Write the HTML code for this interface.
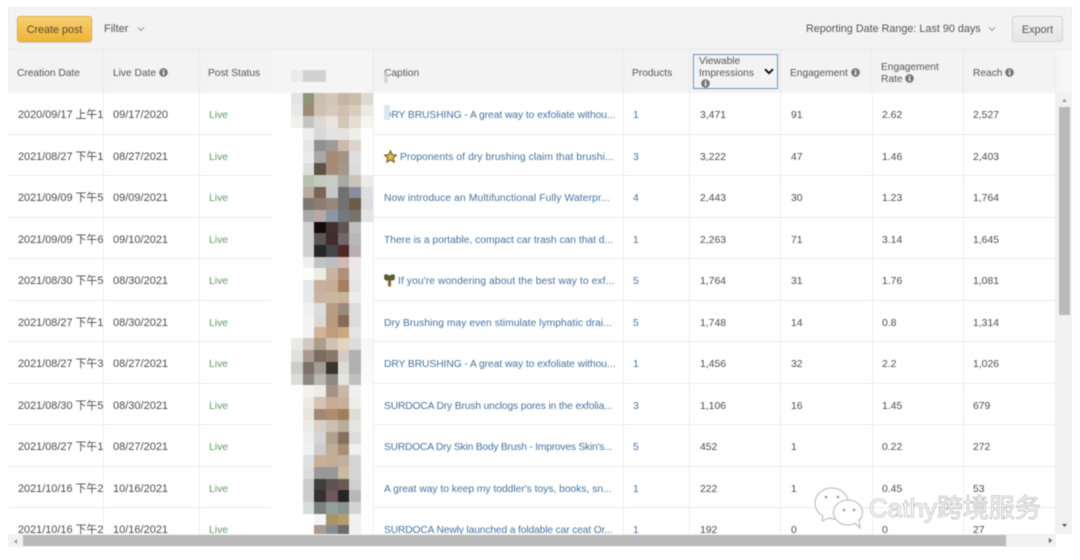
<!DOCTYPE html>
<html><head><meta charset="utf-8"><style>
*{box-sizing:border-box}
html,body{margin:0;padding:0;width:1080px;height:560px;overflow:hidden;background:#fff}
body{font-family:"Liberation Sans","Noto Sans CJK SC",sans-serif;color:#4a4a4a;position:relative}
#w{position:absolute;left:0;top:0;width:1080px;height:560px;filter:blur(.4px)}
.a{position:absolute}
.t{white-space:nowrap}
.h{position:absolute;top:50px;height:43px;border-right:1px solid #e8e8e8;font-size:10.2px;color:#555;line-height:12px}
.h span{position:absolute;white-space:nowrap}
.r{position:absolute;left:8px;width:1048px;height:41.5px;border-bottom:1px solid #ebebeb;font-size:10.4px;line-height:45.5px;color:#4a4a4a}
.r span{position:absolute;top:0;white-space:nowrap}
.r span:nth-child(1){left:10px;width:85px;overflow:hidden;font-size:10.9px}
.r span:nth-child(2){left:105px;font-size:11px}
.r span:nth-child(3){left:201px;color:#5e9a5e;font-size:10.4px}
.r span:nth-child(4){left:376px;color:#44729f;font-size:10.25px}
.r span:nth-child(5){left:625px;color:#44729f}
.r span:nth-child(6){left:692px}
.r span:nth-child(7){left:783px}
.r span:nth-child(8){left:874px}
.r span:nth-child(9){left:965px}
.v{position:absolute;top:93px;width:1px;height:441px;background:#ededed}
#m{position:absolute;left:291px;top:93px;width:82px;display:grid;grid-template-columns:repeat(7,11.7px);grid-auto-rows:11.7px;height:441px;overflow:hidden}
.i{display:inline-block;width:9px;height:9px;vertical-align:-1px}
</style></head><body><div id="w">
<svg width="0" height="0" style="position:absolute"><defs><symbol id="inf" viewBox="0 0 10 10"><circle cx="5" cy="5" r="4.8" fill="#767676"/><rect x="4.2" y="4.2" width="1.7" height="3.6" fill="#fff"/><rect x="4.2" y="2" width="1.7" height="1.5" fill="#fff"/></symbol></defs></svg>

<div class="a" style="left:8px;top:7px;width:1064px;height:43px;background:#f3f3f3;border:1px solid #ececec;border-bottom:1px solid #e8e8e8"></div>
<div class="a" style="left:8px;top:50px;width:1048px;height:43px;background:#f3f3f3"></div>
<div class="a" style="left:1056px;top:50px;width:16px;height:43px;background:#f6f6f6"></div>

<div class="a t" style="left:17px;top:16px;width:75px;height:26px;border-radius:3px;background:linear-gradient(#f7cf72,#efb437);border:1px solid #dfae45;box-shadow:0 1px 1px #ccc;font-size:10.8px;line-height:26px;text-align:center;color:#5a4a2a">Create post</div>
<div class="a t" style="left:104px;top:23px;font-size:11px;color:#555">Filter</div>
<svg class="a" style="left:137px;top:26px" width="8" height="6" viewBox="0 0 8 6"><path d="M1 1.5 L4 4.5 L7 1.5" fill="none" stroke="#9a9a9a" stroke-width="1"/></svg>
<div class="a t" style="left:806px;top:23px;font-size:10.8px;color:#555">Reporting Date Range: Last 90 days</div>
<svg class="a" style="left:988px;top:26px" width="8" height="6" viewBox="0 0 8 6"><path d="M1 1.5 L4 4.5 L7 1.5" fill="none" stroke="#9a9a9a" stroke-width="1"/></svg>
<div class="a t" style="left:1012px;top:16px;width:51px;height:26px;border-radius:2px;background:linear-gradient(#f2f2f2,#e6e6e6);border:1px solid #d4d4d4;font-size:10.8px;line-height:26px;text-align:center;color:#555">Export</div>

<div class="h" style="left:8px;width:96px"><span style="left:9px;top:18px">Creation Date</span></div>
<div class="h" style="left:104px;width:96px"><span style="left:9px;top:18px">Live Date <svg class="i"><use href="#inf"/></svg></span></div>
<div class="h" style="left:200px;width:174px"><span style="left:8px;top:18px">Post Status</span></div>
<div class="h" style="left:374px;width:250px"><span style="left:10px;top:18px">Caption</span></div>
<div class="h" style="left:624px;width:66px"><span style="left:8px;top:18px">Products</span></div>
<div class="h" style="left:690px;width:91px;border-right:1px solid #e8e8e8"><span style="left:9px;top:6px">Viewable</span><span style="left:9px;top:18px">Impressions</span><svg class="i a" style="left:11px;top:29px"><use href="#inf"/></svg></div>
<div class="a" style="left:693px;top:54px;width:85px;height:35px;border:1px solid #6d93b8"></div>
<svg class="a" style="left:764px;top:68px" width="10" height="7" viewBox="0 0 10 7"><path d="M1 1.2 L5 5.2 L9 1.2" fill="none" stroke="#111" stroke-width="1.9"/></svg>
<div class="h" style="left:781px;width:91px"><span style="left:9px;top:18px">Engagement <svg class="i"><use href="#inf"/></svg></span></div>
<div class="h" style="left:872px;width:92px"><span style="left:9px;top:12px">Engagement</span><span style="left:9px;top:24px">Rate <svg class="i"><use href="#inf"/></svg></span></div>
<div class="h" style="left:964px;width:92px;border-right:1px solid #ececec"><span style="left:9px;top:18px">Reach <svg class="i"><use href="#inf"/></svg></span></div>

<div class="a" style="left:8px;top:93px;width:1048px;height:441px;overflow:hidden">
<div class="r" style="top:0;left:0"><span>2020/09/17 上午10:15</span><span>09/17/2020</span><span>Live</span><span style="letter-spacing:-.05px">DRY BRUSHING - A great way to exfoliate withou...</span><span>1</span><span>3,471</span><span>91</span><span>2.62</span><span>2,527</span></div>
<div class="r" style="top:41.5px;left:0"><span>2021/08/27 下午12:30</span><span>08/27/2021</span><span>Live</span><span style="letter-spacing:.1px"><svg width="13" height="13" viewBox="0 0 24 24" style="vertical-align:-3px;margin-right:3px"><path d="M12 1.5 L15.2 8.6 L23 9.4 L17.1 14.6 L18.9 22.4 L12 18.3 L5.1 22.4 L6.9 14.6 L1 9.4 L8.8 8.6 Z" fill="#e3bf45" stroke="#6b5a20" stroke-width="2"/></svg>Proponents of dry brushing claim that brushi...</span><span>3</span><span>3,222</span><span>47</span><span>1.46</span><span>2,403</span></div>
<div class="r" style="top:83px;left:0"><span>2021/09/09 下午5:20</span><span>09/09/2021</span><span>Live</span><span style="letter-spacing:.13px">Now introduce an Multifunctional Fully Waterpr...</span><span>4</span><span>2,443</span><span>30</span><span>1.23</span><span>1,764</span></div>
<div class="r" style="top:124.5px;left:0"><span>2021/09/09 下午6:10</span><span>09/10/2021</span><span>Live</span><span>There is a portable, compact car trash can that d...</span><span>1</span><span>2,263</span><span>71</span><span>3.14</span><span>1,645</span></div>
<div class="r" style="top:166px;left:0"><span>2021/08/30 下午5:40</span><span>08/30/2021</span><span>Live</span><span style="letter-spacing:.1px"><svg width="11" height="13" viewBox="0 0 11 13" style="vertical-align:-3px;margin-right:3px"><path d="M0.5 1 L3 .5 L5.5 2 L8 .5 L10.5 1 L10.5 5 L9 6.5 L7.5 5.5 L7 7 L4 7 L3.5 5.5 L2 6.5 L.5 5 Z" fill="#55622f" stroke="#3d3d20" stroke-width=".5"/><rect x="4" y="6" width="3" height="6.5" fill="#8a6a30"/></svg>If you're wondering about the best way to exf...</span><span>5</span><span>1,764</span><span>31</span><span>1.76</span><span>1,081</span></div>
<div class="r" style="top:207.5px;left:0"><span>2021/08/27 下午1:05</span><span>08/30/2021</span><span>Live</span><span style="letter-spacing:.06px">Dry Brushing may even stimulate lymphatic drai...</span><span>5</span><span>1,748</span><span>14</span><span>0.8</span><span>1,314</span></div>
<div class="r" style="top:249px;left:0"><span>2021/08/27 下午3:25</span><span>08/27/2021</span><span>Live</span><span style="letter-spacing:-.05px">DRY BRUSHING - A great way to exfoliate withou...</span><span>1</span><span>1,456</span><span>32</span><span>2.2</span><span>1,026</span></div>
<div class="r" style="top:290.5px;left:0"><span>2021/08/30 下午5:50</span><span>08/30/2021</span><span>Live</span><span style="letter-spacing:-.13px">SURDOCA Dry Brush unclogs pores in the exfolia...</span><span>3</span><span>1,106</span><span>16</span><span>1.45</span><span>679</span></div>
<div class="r" style="top:332px;left:0"><span>2021/08/27 下午1:15</span><span>08/27/2021</span><span>Live</span><span style="letter-spacing:-.2px">SURDOCA Dry Skin Body Brush - Improves Skin's...</span><span>5</span><span>452</span><span>1</span><span>0.22</span><span>272</span></div>
<div class="r" style="top:373.5px;left:0"><span>2021/10/16 下午2:40</span><span>10/16/2021</span><span>Live</span><span>A great way to keep my toddler's toys, books, sn...</span><span>1</span><span>222</span><span>1</span><span>0.45</span><span>53</span></div>
<div class="r" style="top:415px;left:0"><span>2021/10/16 下午2:30</span><span>10/16/2021</span><span>Live</span><span style="letter-spacing:-.13px">SURDOCA Newly launched a foldable car ceat Or...</span><span>1</span><span>192</span><span>0</span><span>0</span><span>27</span></div>
</div>

<i class="v" style="left:103px"></i><i class="v" style="left:199px"></i><i class="v" style="left:373px"></i><i class="v" style="left:623px"></i><i class="v" style="left:689px"></i><i class="v" style="left:780px"></i><i class="v" style="left:872px"></i><i class="v" style="left:963px"></i><i class="v" style="left:1055px"></i>

<div class="a" style="left:272px;top:93px;width:101px;height:441px;background:#fff"></div>
<div class="a" style="left:272px;top:50px;width:101px;height:43px;background:#f5f5f5"></div>
<div class="a" style="left:291px;top:70px;width:11.7px;height:11.7px;background:#ebebeb"></div>
<div class="a" style="left:302.7px;top:70px;width:23.4px;height:11.7px;background:#d2d2d2"></div>
<div class="a" style="left:384px;top:72px;width:4px;height:11px;background:#ccc;opacity:.7"></div>
<div class="a" style="left:384px;top:105px;width:6px;height:15px;background:#dfe4ee"></div>

<div id="m">
<i style="background:#e4e4e4"></i><i style="background:#8f9576"></i><i style="background:#cdbfb0"></i><i style="background:#d2c6b8"></i><i style="background:#c5b5a4"></i><i style="background:#ccbdab"></i><i style="background:#dcd8d2"></i>
<i style="background:#e8e8e8"></i><i style="background:#9a8b72"></i><i style="background:#d0c0b2"></i><i style="background:#d6c9bd"></i><i style="background:#cfbfb0"></i><i style="background:#d8cebf"></i><i style="background:#ece9e4"></i>
<i style="background:#f0f0ee"></i><i style="background:#c4c4c0"></i><i style="background:#dcd8d2"></i><i style="background:#e8e4dc"></i><i style="background:#d2c6b6"></i><i style="background:#e6ddd4"></i><i style="background:#f6f4f0"></i>
<i></i><i style="background:#eee"></i><i style="background:#d8d8d8"></i><i style="background:#e4e2e2"></i><i style="background:#e4e2dc"></i><i style="background:#eeeeea"></i><i></i>
<i></i><i style="background:#e6e6e6"></i><i style="background:#929090"></i><i style="background:#a09a96"></i><i style="background:#cdb9aa"></i><i style="background:#dcd4cc"></i><i></i>
<i></i><i style="background:#eaeaea"></i><i style="background:#a8a8a8"></i><i style="background:#a58b78"></i><i style="background:#a09488"></i><i style="background:#dedede"></i><i></i>
<i></i><i style="background:#dedede"></i><i style="background:#5f5144"></i><i style="background:#a58c78"></i><i style="background:#a39888"></i><i style="background:#dcdcdc"></i><i></i>
<i></i><i style="background:#b8c0b0"></i><i style="background:#c4cabc"></i><i style="background:#c8ccc4"></i><i style="background:#a8a8a4"></i><i style="background:#ccc4bc"></i><i style="background:#ecebe8"></i>
<i></i><i style="background:#b8aa9c"></i><i style="background:#7a6458"></i><i style="background:#c8c8c8"></i><i style="background:#707070"></i><i style="background:#8a8e9c"></i><i style="background:#dedee4"></i>
<i></i><i style="background:#7e7674"></i><i style="background:#8e7c70"></i><i style="background:#938a7c"></i><i style="background:#727272"></i><i style="background:#6a5c48"></i><i style="background:#dcdce0"></i>
<i></i><i style="background:#a8a8a8"></i><i style="background:#b8a8a8"></i><i style="background:#8c96a4"></i><i style="background:#707880"></i><i style="background:#74746c"></i><i style="background:#e4e4e4"></i>
<i></i><i style="background:#d0d0d0"></i><i style="background:#120c0c"></i><i style="background:#403030"></i><i style="background:#605454"></i><i style="background:#c0c0c0"></i><i></i>
<i></i><i style="background:#d0d0d0"></i><i style="background:#5a5650"></i><i style="background:#402c2c"></i><i style="background:#706868"></i><i style="background:#b8b8b8"></i><i></i>
<i></i><i style="background:#d0d0d0"></i><i style="background:#24262a"></i><i style="background:#44444a"></i><i style="background:#502824"></i><i style="background:#b8b0b0"></i><i></i>
<i></i><i style="background:#f0f0f0"></i><i style="background:#c0c4c4"></i><i style="background:#bcc0c0"></i><i style="background:#d4b8b4"></i><i style="background:#ece6e4"></i><i></i>
<i></i><i style="background:#fcfcf8"></i><i style="background:#ecece4"></i><i style="background:#c8b4a0"></i><i style="background:#b09078"></i><i style="background:#e8e8e8"></i><i></i>
<i></i><i style="background:#e8e8e8"></i><i style="background:#c8b09c"></i><i style="background:#c8ac94"></i><i style="background:#a5805c"></i><i style="background:#e4e4e4"></i><i></i>
<i></i><i style="background:#e8e8e8"></i><i style="background:#c8b4a0"></i><i style="background:#ccb8a0"></i><i style="background:#c8b49c"></i><i style="background:#ecece8"></i><i></i>
<i></i><i style="background:#f0f0f0"></i><i style="background:#dcdcdc"></i><i style="background:#b89c84"></i><i style="background:#9a8c7c"></i><i style="background:#dcdce0"></i><i></i>
<i></i><i style="background:#f4f4f4"></i><i style="background:#dcd8d4"></i><i style="background:#b89c80"></i><i style="background:#8a6a54"></i><i style="background:#dcdcdc"></i><i></i>
<i></i><i style="background:#f4f4f4"></i><i style="background:#d0b498"></i><i style="background:#c09c7c"></i><i style="background:#cba880"></i><i style="background:#e4e4e4"></i><i></i>
<i style="background:#ebe9e6"></i><i style="background:#d4c8c0"></i><i style="background:#ae9c88"></i><i style="background:#cfc2b4"></i><i style="background:#e2d4c0"></i><i style="background:#dedcd8"></i><i style="background:#f8f8f8"></i>
<i style="background:#e0e0dc"></i><i style="background:#a89c90"></i><i style="background:#7c6c60"></i><i style="background:#887868"></i><i style="background:#d4ccc4"></i><i style="background:#b0b0b0"></i><i style="background:#f8f8f8"></i>
<i style="background:#ccc"></i><i style="background:#7e7268"></i><i style="background:#a09c94"></i><i style="background:#383430"></i><i style="background:#dcdcd4"></i><i style="background:#b0b0b0"></i><i style="background:#fafafa"></i>
<i style="background:#dcdcd8"></i><i style="background:#8c8880"></i><i style="background:#b8b8ae"></i><i style="background:#908880"></i><i style="background:#e4e4e0"></i><i style="background:#c0c0c0"></i><i style="background:#fafafa"></i>
<i></i><i style="background:#f4f0ec"></i><i style="background:#ecebe6"></i><i style="background:#a49488"></i><i style="background:#c8b8a8"></i><i style="background:#f0f0f0"></i><i></i>
<i></i><i style="background:#ece8e4"></i><i style="background:#d4c4b4"></i><i style="background:#c8ac94"></i><i style="background:#c8b09c"></i><i style="background:#f0ece8"></i><i></i>
<i></i><i style="background:#e8e4e0"></i><i style="background:#a08874"></i><i style="background:#ae8c6c"></i><i style="background:#a08058"></i><i style="background:#dcdcd8"></i><i></i>
<i></i><i style="background:#ecece8"></i><i style="background:#d8d0c4"></i><i style="background:#ccc0b4"></i><i style="background:#b8aea0"></i><i style="background:#e4e4e0"></i><i></i>
<i></i><i style="background:#eee"></i><i style="background:#d4d4d4"></i><i style="background:#b0a090"></i><i style="background:#847060"></i><i style="background:#dcdcdc"></i><i></i>
<i></i><i style="background:#f0f0f0"></i><i style="background:#ccccd0"></i><i style="background:#c0ac98"></i><i style="background:#a89078"></i><i style="background:#f0f0f0"></i><i></i>
<i></i><i style="background:#e0e0e0"></i><i style="background:#c8b098"></i><i style="background:#c4ac94"></i><i style="background:#c0b09c"></i><i style="background:#d4d4d8"></i><i></i>
<i></i><i style="background:#dcdcdc"></i><i style="background:#989898"></i><i style="background:#989898"></i><i style="background:#c8bca0"></i><i style="background:#d4d4d4"></i><i></i>
<i></i><i style="background:#ccc"></i><i style="background:#403e3e"></i><i style="background:#605050"></i><i style="background:#6c5a50"></i><i style="background:#d0d0d0"></i><i></i>
<i></i><i style="background:#ccc"></i><i style="background:#383030"></i><i style="background:#6c585c"></i><i style="background:#242424"></i><i style="background:#b8b8b8"></i><i></i>
<i></i><i style="background:#d8dcdc"></i><i style="background:#788080"></i><i style="background:#94a09c"></i><i style="background:#889490"></i><i style="background:#d0d4d4"></i><i></i>
<i></i><i></i><i style="background:#f4f4f4"></i><i style="background:#a89468"></i><i style="background:#b89c70"></i><i style="background:#f0f0f0"></i><i></i>
<i></i><i></i><i style="background:#a89c94"></i><i style="background:#888c90"></i><i style="background:#6c6c70"></i><i style="background:#f0f0f0"></i><i></i>
</div>

<!-- vertical scrollbar -->
<div class="a" style="left:1056px;top:93px;width:16px;height:441px;background:#f1f1f1"></div>
<svg class="a" style="left:1061px;top:98px" width="7" height="5"><path d="M3.5 1 L6 4 L1 4 Z" fill="#999"/></svg>
<div class="a" style="left:1059px;top:107px;width:11px;height:208px;background:#b9b9b9"></div>
<svg class="a" style="left:1061px;top:523px" width="7" height="5"><path d="M1 1 L6 1 L3.5 4 Z" fill="#555"/></svg>
<!-- horizontal scrollbar -->
<div class="a" style="left:8px;top:534px;width:1048px;height:13px;background:#f1f1f1"></div>
<svg class="a" style="left:13px;top:538px" width="5" height="7"><path d="M4 1 L4 6 L1 3.5 Z" fill="#999"/></svg>
<div class="a" style="left:23px;top:535px;width:983px;height:11px;background:#b9b9b9"></div>
<svg class="a" style="left:1048px;top:537px" width="5" height="7"><path d="M1 1 L1 6 L4 3.5 Z" fill="#555"/></svg>
<div class="a" style="left:1056px;top:534px;width:16px;height:13px;background:#fff"></div>

<!-- watermark -->
<svg class="a" style="left:810px;top:485px" width="240" height="48" viewBox="0 0 240 48">
<path d="M22 3 C12 3 5 10 5 18 C5 24 8 28 13 31 L12 36 L19 33 C21 33.5 23 34 25 34" fill="#fff" fill-opacity=".6" stroke="#b5b5b5" stroke-width="1"/>
<path d="M22 3 C30 3 36 8 38 15" fill="none" stroke="#b5b5b5" stroke-width="1"/>
<circle cx="16" cy="12" r="1.3" fill="#999"/><circle cx="28" cy="12" r="1.3" fill="#999"/>
<ellipse cx="38" cy="27.5" rx="14.5" ry="12.5" fill="#fff" fill-opacity=".7" stroke="#b5b5b5" stroke-width="1"/>
<path d="M45 38 L50 43 L49 34" fill="#fff" stroke="#b5b5b5" stroke-width="1"/>
<circle cx="34" cy="25" r="1.3" fill="#999"/><circle cx="44" cy="25" r="1.3" fill="#999"/>
<text x="59" y="32" font-family="Liberation Sans,Noto Sans CJK SC,sans-serif" font-size="26" fill="#fff" fill-opacity=".8" stroke="#a4a4a4" stroke-width=".55">Cathy跨境服务</text>
</svg>
</div></body></html>
